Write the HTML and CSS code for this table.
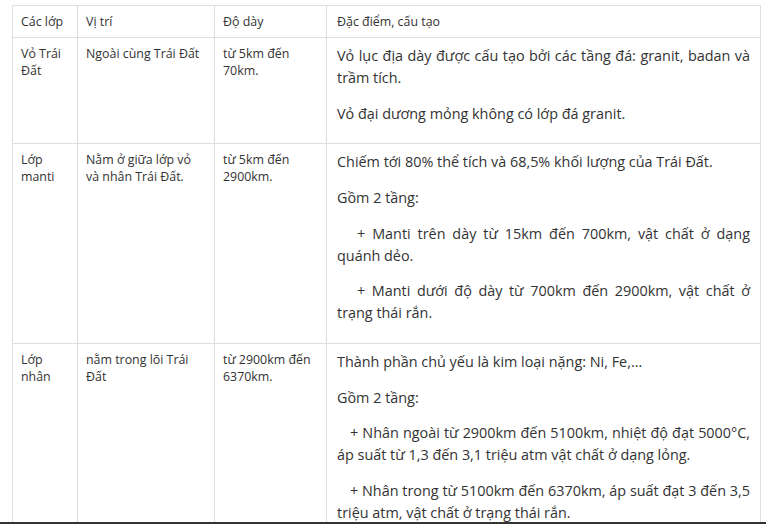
FILE: index.html
```html
<!DOCTYPE html>
<html lang="vi">
<head>
<meta charset="utf-8">
<link rel="stylesheet" href="styles.css">
</head>
<body>
<table class="layers">
  <colgroup>
    <col class="c1"><col class="c2"><col class="c3"><col class="c4">
  </colgroup>
  <tr class="head">
    <td>Các lớp</td>
    <td>Vị trí</td>
    <td>Độ dày</td>
    <td>Đặc điểm, cấu tạo</td>
  </tr>
  <tr>
    <td>Vỏ Trái Đất</td>
    <td>Ngoài cùng Trái Đất</td>
    <td>từ 5km đến 70km.</td>
    <td class="desc">
      <p>Vỏ lục địa dày được cấu tạo bởi các tầng đá: granit, badan và trầm tích.</p>
      <p>Vỏ đại dương mỏng không có lớp đá granit.</p>
    </td>
  </tr>
  <tr>
    <td>Lớp manti</td>
    <td>Nằm ở giữa lớp vỏ và nhân Trái Đất.</td>
    <td>từ 5km đến 2900km.</td>
    <td class="desc">
      <p>Chiếm tới 80% thể tích và 68,5% khối lượng của Trái Đất.</p>
      <p>Gồm 2 tầng:</p>
      <p class="sub-wide">+ Manti trên dày từ 15km đến 700km, vật chất ở dạng quánh dẻo.</p>
      <p class="sub-wide">+ Manti dưới độ dày từ 700km đến 2900km, vật chất ở trạng thái rắn.</p>
    </td>
  </tr>
  <tr>
    <td>Lớp nhân</td>
    <td>nằm trong lõi Trái Đất</td>
    <td>từ 2900km đến 6370km.</td>
    <td class="desc">
      <p>Thành phần chủ yếu là kim loại nặng: Ni, Fe,...</p>
      <p>Gồm 2 tầng:</p>
      <p class="sub">+ Nhân ngoài từ 2900km đến 5100km, nhiệt độ đạt 5000°C, áp suất từ 1,3 đến 3,1 triệu atm vật chất ở dạng lỏng.</p>
      <p class="sub">+ Nhân trong từ 5100km đến 6370km, áp suất đạt 3 đến 3,5 triệu atm, vật chất ở trạng thái rắn.</p>
    </td>
  </tr>
</table>
<div class="edge"></div>
</body>
</html>
```
FILE: styles.css
```css
html, body {
  margin: 0;
  padding: 0;
  background: #fff;
}
body {
  padding: 5px 0 0 12px;
  font-family: "Open Sans", "Liberation Sans", sans-serif;
  color: #333;
}
.layers {
  border-collapse: collapse;
  table-layout: fixed;
  width: 748px;
  font-size: 12.4px;
  line-height: 17px;
}
.c1 { width: 65px; }
.c2 { width: 137px; }
.c3 { width: 112px; }
.c4 { width: 434px; }
.layers td {
  border: 1px solid #dedede;
  vertical-align: top;
  padding: 7px 8px 5px;
}
.layers .head td {
  padding: 7px 8px;
}
.layers td.desc {
  padding: 7px 10px 5px;
  font-size: 14.4px;
  line-height: 21.75px;
  text-align: justify;
}
.layers .head td:last-child {
  padding-left: 10px;
  font-size: 12.4px;
}
.desc p {
  margin: 0 0 14px;
}
.desc p.sub-wide {
  text-indent: 20px;
}
.desc p.sub {
  text-indent: 13px;
}
.edge {
  position: fixed;
  left: 0;
  right: 0;
  bottom: 0;
  height: 2px;
  background: #333;
}
```
